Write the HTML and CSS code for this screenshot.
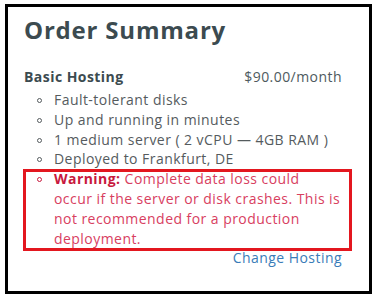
FILE: index.html
```html
<!DOCTYPE html>
<html lang="en">
    <head>
        <title>Order Summary</title>
        <link rel="stylesheet" href="styles.css">
    </head>
    <body>
        <div class="frame">
            <h1 class="title">Order Summary</h1>
            <div class="plan">
                <span class="plan-name">Basic Hosting</span>
                <span class="plan-price">$90.00/month</span>
            </div>
            <ul class="features">
                <li><span class="dot"></span><span>Fault-tolerant disks</span></li>
                <li><span class="dot"></span><span>Up and running in minutes</span></li>
                <li><span class="dot"></span><span>1 medium server ( 2 vCPU — 4GB RAM )</span></li>
                <li><span class="dot"></span><span>Deployed to Frankfurt, DE</span></li>
                <li class="warning">
                    <span class="dot"></span>
                    <span class="warning-text"><strong>Warning:</strong> Complete data loss could<br>occur if the server or disk crashes. This is<br>not recommended for a production<br>deployment.</span>
                </li>
            </ul>
            <div class="change"><a href="#">Change Hosting</a></div>
        </div>
    </body>
</html>
```
FILE: styles.css
```css
* {
    box-sizing: border-box;
    font-family: "Open Sans", Arial, sans-serif;
}

body {
    margin: 0;
    background-color: white;
}

.frame {
    width: 367px;
    height: 290px;
    margin: 4px 0 0 5px;
    border: 3px solid black;
    padding: 7px 27px 0 16px;
}

.title {
    margin: 0;
    font-size: 24px;
    line-height: 32px;
    font-weight: 700;
    letter-spacing: 0.8px;
    color: #3c4b50;
}

.plan {
    display: flex;
    justify-content: space-between;
    margin-top: 21px;
    font-size: 14px;
    line-height: 20px;
    letter-spacing: 0.45px;
    color: #4e5a5e;
}

.plan-name {
    font-weight: 700;
    color: #3c4b50;
}

.features {
    list-style: none;
    margin: 3px 0 0 0;
    padding: 0;
    font-size: 14px;
    line-height: 19.8px;
    letter-spacing: 0.45px;
    color: #555b5e;
}

.features li {
    display: flex;
    align-items: flex-start;
    padding-left: 13px;
}

.dot {
    flex: none;
    width: 5px;
    height: 5px;
    margin: 8px 12px 0 0;
    border: 1px solid #555b5e;
    border-radius: 50%;
}

.warning {
    position: relative;
    color: #d8405f;
}

.warning-text {
    white-space: nowrap;
}

.warning strong {
    color: #c8193d;
}

.warning .dot {
    border-color: #c8193d;
}

.warning::after {
    content: "";
    position: absolute;
    top: 0;
    bottom: -3px;
    left: -1px;
    right: -10px;
    border: 3px solid #e3171f;
}

.change {
    text-align: right;
    margin-top: 0;
    font-size: 14px;
    line-height: 20px;
    letter-spacing: 0.45px;
}

.change a {
    color: #3a7cb8;
    text-decoration: none;
}
```
